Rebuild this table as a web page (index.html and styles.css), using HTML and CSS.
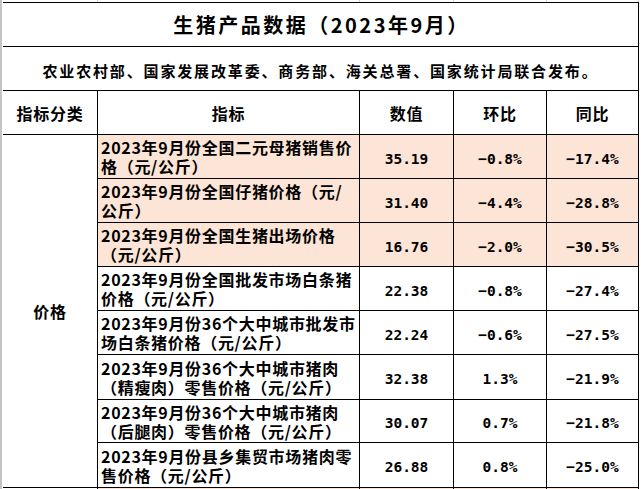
FILE: index.html
```html
<!DOCTYPE html>
<html lang="zh-CN">
<head>
<meta charset="utf-8">
<title>生猪产品数据（2023年9月）</title>
<link rel="stylesheet" href="styles.css">
</head>
<body>
<div class="sheet">
  <div class="gridtop"><span></span><span></span><span></span><span></span><span></span></div>
  <div class="table">
    <div class="cell title">生猪产品数据（2023年9月）</div>
    <div class="cell sub">农业农村部、国家发展改革委、商务部、海关总署、国家统计局联合发布。</div>

    <div class="cell hd">指标分类</div>
    <div class="cell hd">指标</div>
    <div class="cell hd">数值</div>
    <div class="cell hd">环比</div>
    <div class="cell hd">同比</div>

    <div class="cell cat">价格</div>

    <div class="cell txt hl">2023年9月份全国二元母猪销售价<br>格（元/公斤）</div>
    <div class="cell num hl">35.19</div>
    <div class="cell num hl">−0.8%</div>
    <div class="cell num hl">−17.4%</div>

    <div class="cell txt hl">2023年9月份全国仔猪价格（元/<br>公斤）</div>
    <div class="cell num hl">31.40</div>
    <div class="cell num hl">−4.4%</div>
    <div class="cell num hl">−28.8%</div>

    <div class="cell txt hl">2023年9月份全国生猪出场价格<br>（元/公斤）</div>
    <div class="cell num hl">16.76</div>
    <div class="cell num hl">−2.0%</div>
    <div class="cell num hl">−30.5%</div>

    <div class="cell txt">2023年9月份全国批发市场白条猪<br>价格（元/公斤）</div>
    <div class="cell num">22.38</div>
    <div class="cell num">−0.8%</div>
    <div class="cell num">−27.4%</div>

    <div class="cell txt">2023年9月份36个大中城市批发市<br>场白条猪价格（元/公斤）</div>
    <div class="cell num">22.24</div>
    <div class="cell num">−0.6%</div>
    <div class="cell num">−27.5%</div>

    <div class="cell txt">2023年9月份36个大中城市猪肉<br>（精瘦肉）零售价格（元/公斤）</div>
    <div class="cell num">32.38</div>
    <div class="cell num">1.3%</div>
    <div class="cell num">−21.9%</div>

    <div class="cell txt">2023年9月份36个大中城市猪肉<br>（后腿肉）零售价格（元/公斤）</div>
    <div class="cell num">30.07</div>
    <div class="cell num">0.7%</div>
    <div class="cell num">−21.8%</div>

    <div class="cell txt">2023年9月份县乡集贸市场猪肉零<br>售价格（元/公斤）</div>
    <div class="cell num">26.88</div>
    <div class="cell num">0.8%</div>
    <div class="cell num">−25.0%</div>

    <div class="cell edge"></div>
    <div class="cell edge hl"></div>
    <div class="cell edge hl"></div>
    <div class="cell edge hl"></div>
    <div class="cell edge hl"></div>
  </div>
</div>
</body>
</html>
```

FILE: styles.css
```css
html, body {
  margin: 0;
  padding: 0;
  background: #ffffff;
  overflow: hidden;
}

body {
  width: 641px;
  height: 489px;
  font-family: "Noto Sans CJK SC", "Noto Sans", sans-serif;
  font-weight: 700;
  color: #000000;
}

.sheet {
  border-left: 2px solid #c4c4c4;
  padding-left: 1px;
  width: 636px;
}

.gridtop {
  display: grid;
  grid-template-columns: 95px 262px 94px 93px 92px;
  height: 2px;
}

.gridtop span {
  border-right: 1px solid #d4d4d4;
}

.table {
  display: grid;
  grid-template-columns: 95px 262px 94px 93px 92px;
  grid-template-rows: 44px 44px 44px 44px 44px 44px 44px 44px 45px 43px 45px 2px;
  border-top: 1px solid #000000;
}

.cell {
  box-sizing: border-box;
  border-right: 1px solid #000000;
  border-bottom: 1px solid #000000;
  display: flex;
  align-items: center;
  justify-content: center;
  white-space: nowrap;
  overflow: hidden;
}

.cell.edge {
  border-bottom: none;
}

.title {
  grid-column: 1 / 6;
  font-size: 20px;
  letter-spacing: 2.5px;
  padding-left: 2px;
}

.sub {
  grid-column: 1 / 6;
  font-size: 15px;
  letter-spacing: 1.85px;
  padding-top: 3px;
}

.hd {
  font-size: 16px;
  letter-spacing: 0.7px;
}

.cat {
  grid-row: 4 / 12;
  font-size: 16px;
  letter-spacing: 0.7px;
}

.txt {
  justify-content: flex-start;
  align-items: center;
  padding-left: 3px;
  padding-top: 1px;
  font-size: 16px;
  line-height: 19px;
  letter-spacing: 0.7px;
}

.num {
  font-family: "DejaVu Sans Mono", "Liberation Mono", monospace;
  font-size: 14.5px;
  padding-top: 4px;
}

.hl {
  background: #fce4d6;
}
```
